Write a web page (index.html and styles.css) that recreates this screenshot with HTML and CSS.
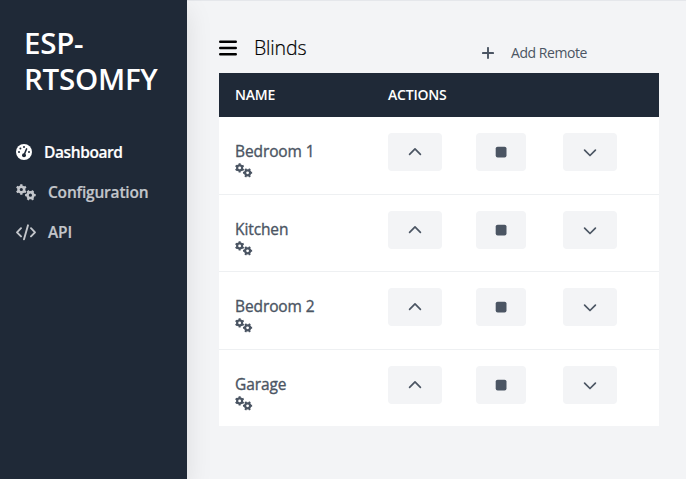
FILE: index.html
```html
<!DOCTYPE html>
<html lang="en">
<head>
<meta charset="utf-8">
<title>ESP-RTSOMFY</title>
<link rel="stylesheet" href="styles.css">
</head>
<body>
<svg class="sprite" aria-hidden="true">
  <symbol id="gears" viewBox="0 0 20 17">
    <g fill="none" stroke="currentColor">
      <circle cx="5.3" cy="5.5" r="2.85" stroke-width="2.5"/>
      <path stroke-width="2.3" d="M5.3 0.2v2.6M5.3 8.2v2.6M.7 2.85l2.25 1.3M7.65 6.85l2.25 1.3M9.9 2.85l-2.25 1.3M2.95 6.85L.7 8.15"/>
      <circle cx="14.4" cy="11.2" r="2.85" stroke-width="2.5"/>
      <path stroke-width="2.3" d="M9.1 11.2h2.6M17.1 11.2h2.6M11.75 6.6l1.3 2.25M15.75 13.55l1.3 2.25M17.05 6.6l-1.3 2.25M13.05 13.55l-1.3 2.25"/>
    </g>
  </symbol>
  <symbol id="up" viewBox="0 0 14 14"><path d="M1.6 9.3L7 3.9l5.4 5.4" fill="none" stroke="currentColor" stroke-width="1.7" stroke-linecap="round" stroke-linejoin="round"/></symbol>
  <symbol id="down" viewBox="0 0 14 14"><path d="M1.6 5.1L7 10.5l5.4-5.4" fill="none" stroke="currentColor" stroke-width="1.7" stroke-linecap="round" stroke-linejoin="round"/></symbol>
  <symbol id="stop" viewBox="0 0 14 14"><rect x="1.7" y="1.7" width="10.8" height="10.8" rx="1.9" fill="currentColor"/></symbol>
</svg>
<div class="app">
  <aside class="sidebar">
    <h1 class="brand">ESP-<wbr>RTSOMFY</h1>
    <nav class="nav">
      <a class="nav-item active">
        <svg class="icon-gauge" viewBox="0 0 16 16"><circle cx="8" cy="8" r="8" fill="currentColor"/><g class="cut"><circle cx="8" cy="3" r="1"/><circle cx="4.4" cy="4.5" r="1"/><circle cx="3" cy="8" r="1"/><circle cx="13" cy="8" r="1"/><circle cx="8" cy="11.2" r="2"/><path class="needle" d="M8 11l2.6-6.1"/></g></svg>
        <span>Dashboard</span>
      </a>
      <a class="nav-item"><svg class="icon-wide" viewBox="0 0 20 17"><use href="#gears"/></svg><span>Configuration</span></a>
      <a class="nav-item"><svg class="icon-wide" viewBox="0 0 20 17"><path d="M5 4.2L1 8.3l4 4.1M15 4.2l4 4.1-4 4.1M12 1.3L8 15.3" fill="none" stroke="currentColor" stroke-width="1.9" stroke-linecap="round" stroke-linejoin="round"/></svg><span>API</span></a>
    </nav>
  </aside>
  <main class="main">
    <header class="toolbar">
      <svg class="icon-menu" viewBox="0 0 18 16"><path d="M1.2 1.8h15.6M1.2 8h15.6M1.2 14.2h15.6" stroke="currentColor" stroke-width="2.4" stroke-linecap="round"/></svg>
      <h2 class="title">Blinds</h2>
      <a class="add"><svg class="icon-plus" viewBox="0 0 12 12"><path d="M6 .9v10.2M.9 6h10.2" stroke="currentColor" stroke-width="1.9" stroke-linecap="round"/></svg><span>Add Remote</span></a>
    </header>
    <section class="table">
      <div class="head"><span>NAME</span><span>ACTIONS</span></div>
      <div class="row"><div class="name"><span>Bedroom 1</span><svg class="icon-cogs"><use href="#gears"/></svg></div><button class="btn"><svg><use href="#up"/></svg></button><button class="btn stop"><svg><use href="#stop"/></svg></button><button class="btn"><svg><use href="#down"/></svg></button></div>
      <div class="row"><div class="name"><span>Kitchen</span><svg class="icon-cogs"><use href="#gears"/></svg></div><button class="btn"><svg><use href="#up"/></svg></button><button class="btn stop"><svg><use href="#stop"/></svg></button><button class="btn"><svg><use href="#down"/></svg></button></div>
      <div class="row"><div class="name"><span>Bedroom 2</span><svg class="icon-cogs"><use href="#gears"/></svg></div><button class="btn"><svg><use href="#up"/></svg></button><button class="btn stop"><svg><use href="#stop"/></svg></button><button class="btn"><svg><use href="#down"/></svg></button></div>
      <div class="row"><div class="name"><span>Garage</span><svg class="icon-cogs"><use href="#gears"/></svg></div><button class="btn"><svg><use href="#up"/></svg></button><button class="btn stop"><svg><use href="#stop"/></svg></button><button class="btn"><svg><use href="#down"/></svg></button></div>
    </section>
  </main>
</div>
</body>
</html>
```
FILE: styles.css
```css
* { box-sizing: border-box; }
body { margin: 0; font-family: "Open Sans", "Noto Sans", sans-serif; color: #4b5563; background: #f3f4f6; }
.sprite { display: none; }
svg { display: block; flex: none; }
.app { display: flex; height: 479px; overflow: hidden; }
.sidebar { width: 187px; flex: none; background: #1f2937; box-shadow: 0 10px 25px rgba(0, 0, 0, .1); z-index: 1; }
.brand { margin: 0; padding: 25px 0 0 24px; font-size: 29.5px; line-height: 36px; font-weight: 600; color: #fff; letter-spacing: -.25px; }
.nav { display: flex; flex-direction: column; margin-top: 35px; }
.nav-item { display: flex; align-items: center; gap: 12px; height: 40px; padding-left: 16px; font-size: 15.5px; font-weight: 600; color: #c3c6cb; letter-spacing: -.2px; white-space: nowrap; -webkit-text-stroke: .2px; }
.nav-item.active { color: #fff; letter-spacing: -.4px; }
.icon-gauge { width: 16px; height: 16px; }
.cut { fill: #1f2937; }
.needle { fill: none; stroke: #1f2937; stroke-width: 1.5; stroke-linecap: round; }
.icon-wide { width: 20px; height: 17px; }
.main { flex: 1; padding: 0 27px 0 32px; border-top: 1px solid #e5e7eb; }
.toolbar { display: flex; height: 72px; align-items: flex-start; color: #000; }
.icon-menu { width: 18px; height: 16px; margin-top: 39px; }
.title { width: 228px; margin: 33px 0 0 17px; font-size: 19.5px; line-height: 28px; font-weight: 300; letter-spacing: -.15px; -webkit-text-stroke: .2px; }
.add { display: flex; align-items: center; gap: 17px; margin-top: 42px; height: 20px; font-size: 14px; color: #4b5563; letter-spacing: -.45px; white-space: nowrap; }
.add span { margin-top: -1px; }
.icon-plus { width: 12px; height: 12px; }
.table { background: #fff; height: 353px; }
.head { display: grid; grid-template-columns: 153px 1fr; height: 44px; align-items: center; padding: 0 16px 2px; background: #1f2937; color: #fff; font-size: 14px; font-weight: 600; letter-spacing: -.2px; }
.row { display: flex; align-items: flex-start; height: 77.5px; padding: 16px 16px 0; border-bottom: 1px solid #eef0f2; }
.row:last-child { border-bottom: 0; }
.name { width: 153px; padding-top: 7px; font-size: 15.5px; line-height: 23px; letter-spacing: -.1px; -webkit-text-stroke: .35px; }
.name span { display: block; }
.icon-cogs { width: 17.5px; height: 15px; }
.btn { display: flex; align-items: center; justify-content: center; width: 54px; height: 38px; padding: 0; border: 0; border-radius: 4px; background: #f3f4f6; color: #4b5563; }
.btn svg { width: 14px; height: 14px; }
.btn.stop { width: 50px; margin: 0 37px 0 34px; }
```
